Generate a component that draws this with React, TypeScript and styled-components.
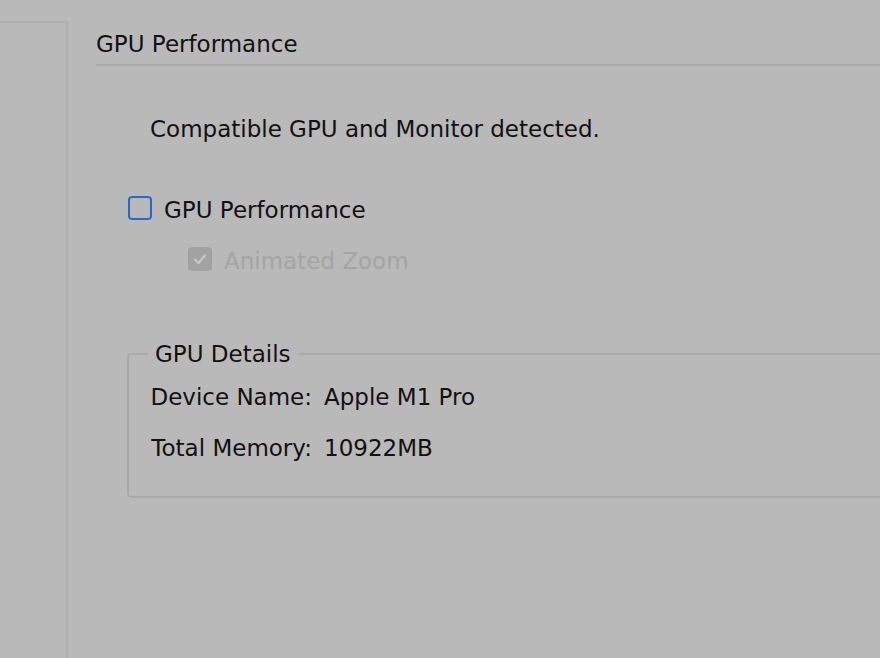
import React from "react";
import styled, { createGlobalStyle } from "styled-components";

const GlobalStyle = createGlobalStyle`
  html, body {
    margin: 0;
    padding: 0;
    background: #b9b9b9;
    font-family: "DejaVu Sans", "Liberation Sans", sans-serif;
    color: #111;
  }
  #root {
    height: 658px;
    overflow: hidden;
  }
`;

const Layout = styled.div`
  display: flex;
  height: 658px;
  padding-top: 21px;
  box-sizing: border-box;
`;

const Sidebar = styled.aside`
  width: 68px;
  flex-shrink: 0;
  border-top: 2px solid #aeaeae;
  border-right: 2px solid #aeaeae;
  box-sizing: border-box;
`;

const Content = styled.main`
  flex: 1;
  padding-left: 28px;
  margin-top: -21px;
  padding-top: 31px;
`;

const Title = styled.h2`
  margin: 0;
  font-size: 23px;
  font-weight: normal;
  line-height: 26px;
  padding-bottom: 7px;
  border-bottom: 2px solid #aaaaaa;
`;

const Message = styled.p`
  margin: 0;
  padding: 50px 0 0 54px;
  font-size: 23px;
  line-height: 26px;
`;

const Options = styled.div`
  display: flex;
  flex-direction: column;
  gap: 25px;
  padding-top: 55px;
  margin-left: 32px;
`;

const CheckRow = styled.label<{ $indent: number; $disabled?: boolean }>`
  display: flex;
  align-items: center;
  gap: 12px;
  margin-left: ${(p) => p.$indent}px;
  font-size: 23px;
  line-height: 26px;
  color: ${(p) => (p.$disabled ? "#a4a4a4" : "#111")};
`;

const Box = styled.span<{ $disabled?: boolean }>`
  width: 24px;
  height: 24px;
  box-sizing: border-box;
  border-radius: 4px;
  display: flex;
  align-items: center;
  justify-content: center;
  margin-top: -5px;
  border: ${(p) => (p.$disabled ? "none" : "2px solid #2767cf")};
  background: ${(p) => (p.$disabled ? "#a2a2a2" : "transparent")};
`;

const Group = styled.fieldset`
  margin: 68px 0 0 31px;
  padding: 0 0 34px 0;
  border: 2px solid #a9a9a9;
  border-right: none;
  border-radius: 5px 0 0 5px;
  min-width: 0;
`;

const Legend = styled.legend`
  font-size: 23px;
  padding: 0 7px;
  margin-left: 19px;
  line-height: 24px;
`;

const Details = styled.div`
  display: grid;
  grid-template-columns: 183px auto;
  column-gap: 12px;
  row-gap: 23px;
  font-size: 23px;
  line-height: 28px;
  padding-top: 17px;
`;

const Label = styled.span`
  text-align: right;
`;

function Check() {
  return (
    <svg width="16" height="16" viewBox="0 0 16 16">
      <path
        d="M3 8.5 L6.5 12 L13 4.5"
        fill="none"
        stroke="#c6c6c6"
        strokeWidth="2.4"
        strokeLinecap="round"
        strokeLinejoin="round"
      />
    </svg>
  );
}

export default function App() {
  return (
    <>
      <GlobalStyle />
      <Layout>
        <Sidebar />
        <Content>
          <Title>GPU Performance</Title>
          <Message>Compatible GPU and Monitor detected.</Message>
          <Options>
            <CheckRow $indent={0}>
              <Box />
              GPU Performance
            </CheckRow>
            <CheckRow $indent={60} $disabled>
              <Box $disabled>
                <Check />
              </Box>
              Animated Zoom
            </CheckRow>
          </Options>
          <Group>
            <Legend>GPU Details</Legend>
            <Details>
              <Label>Device Name:</Label>
              <span>Apple M1 Pro</span>
              <Label>Total Memory:</Label>
              <span>10922MB</span>
            </Details>
          </Group>
        </Content>
      </Layout>
    </>
  );
}
